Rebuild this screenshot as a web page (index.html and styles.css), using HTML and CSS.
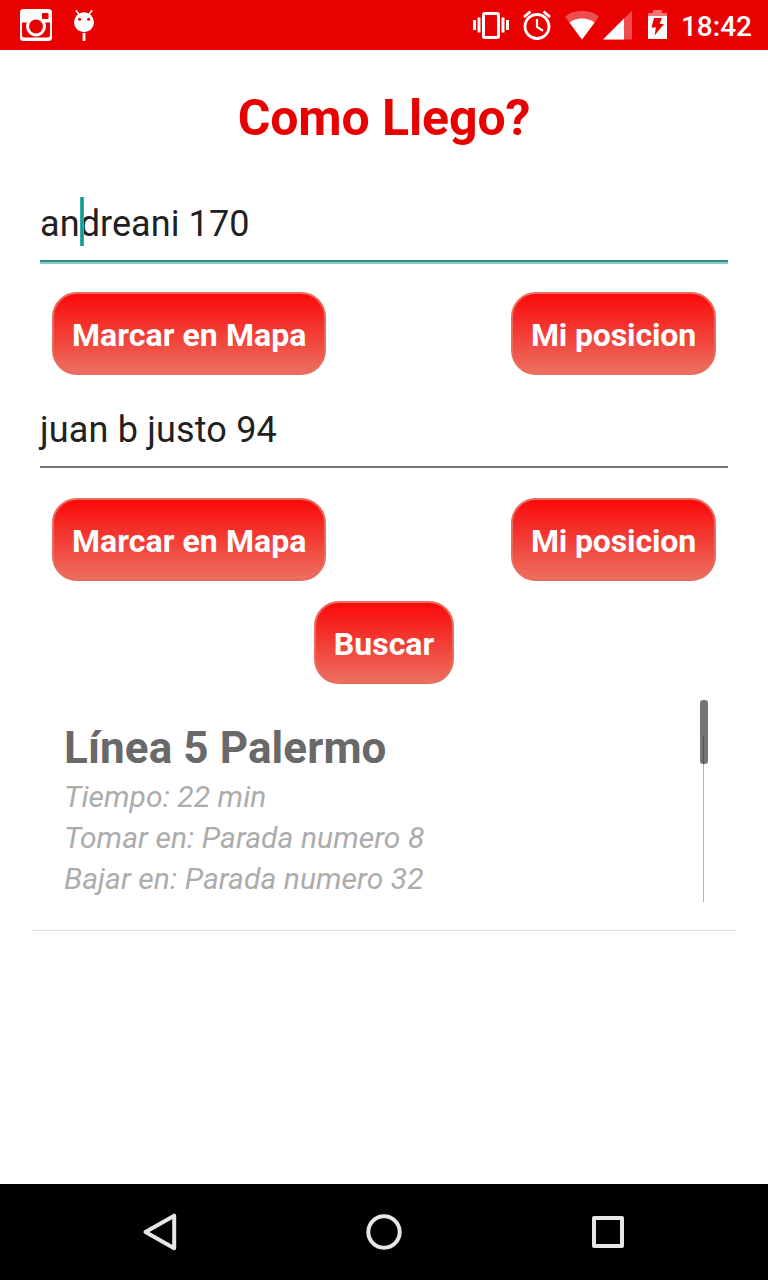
FILE: index.html
```html
<!DOCTYPE html>
<html lang="es">
<head>
    <meta charset="UTF-8">
    <meta name="viewport" content="width=device-width, initial-scale=1.0">
    <title>Como Llego?</title>
    <link rel="stylesheet" href="styles.css">
</head>
<body>
    <div class="status-bar">
        <div class="notifications">
            <svg width="32" height="32" viewBox="0 0 32 32">
                <rect width="32" height="32" rx="3.500" fill="#fff"/>
                <rect x="22" y="4" width="6.500" height="6" rx="1" fill="#e90000"/>
                <path fill="#e90000" d="M2 13.500h28V26a2.500 2.500 0 0 1-2.500 2.500h-23A2.500 2.500 0 0 1 2 26z"/>
                <path fill="#fff" d="M7 13h18v2H7z"/>
                <circle cx="16" cy="17.500" r="10" fill="#fff"/>
                <circle cx="16" cy="17.500" r="6.900" fill="#e90000"/>
            </svg>
            <svg width="22" height="32" viewBox="0 0 22 32">
                <circle cx="11" cy="13.300" r="10" fill="#fff"/>
                <path d="M2.800 1.200l3.500 4.500M19.200 1.200l-3.500 4.500" stroke="#fff" stroke-width="1.600"/>
                <path d="M11 24v8" stroke="#fff" stroke-width="2.800"/>
                <circle cx="6.600" cy="10.300" r="1.500" fill="#e90000"/>
                <circle cx="15.600" cy="10.300" r="1.500" fill="#e90000"/>
            </svg>
        </div>
        <div class="system">
            <svg class="vibrate" width="36" height="32" viewBox="0 0 36 32">
                <rect x="10.500" y="4.500" width="15" height="24" rx="1.500" fill="none" stroke="#fff" stroke-width="3"/>
                <path fill="#fff" d="M0 11h3v10H0zM4.500 8.500h3v15h-3zM28.500 8.500h3v15h-3zM33 11h3v10h-3z"/>
            </svg>
            <svg class="alarm" width="28" height="32" viewBox="0 0 28 32">
                <g fill="none" stroke="#fff" stroke-width="2.800">
                    <circle cx="14" cy="17.500" r="12"/>
                    <path d="M1 8l6.500-5.500M27 8l-6.500-5.500"/>
                    <path d="M14 10v8l6 3.800" stroke-width="2.200"/>
                </g>
            </svg>
            <svg class="wifi" width="34" height="32" viewBox="0 0 34 32">
                <path fill="#fff" fill-opacity=".3" d="M17 30.500L0 7.500C9.500 .2 24.500 .2 34 7.500z"/>
                <path fill="#fff" d="M17 30.500L4.300 13.500C11.500 8.100 22.500 8.100 29.700 13.500z"/>
            </svg>
            <svg class="signal" width="29" height="32" viewBox="0 0 29 32">
                <path fill="#fff" fill-opacity=".3" d="M0 30.500L29 1.500v29z"/>
                <path fill="#fff" d="M0 30.500L21 9.500v21z"/>
            </svg>
            <svg class="battery" width="19" height="32" viewBox="0 0 19 32">
                <path fill="#fff" fill-opacity=".45" d="M5 1h9v3h5v3H0V4h5z"/>
                <path fill="#fff" d="M0 7h19v23H0z"/>
                <path fill="#e90000" d="M6 9h8l-2.500 6H16L6.500 26.500l1.500-8H3.500z"/>
            </svg>
            <span class="clock">18:42</span>
        </div>
    </div>

    <div class="content">
        <h1 class="title">Como Llego?</h1>

        <div class="field field-active">an<span class="cursor"></span>dreani 170</div>
        <div class="button-row">
            <button class="btn btn-map">Marcar en Mapa</button>
            <button class="btn btn-position">Mi posicion</button>
        </div>

        <div class="field">juan b justo 94</div>
        <div class="button-row">
            <button class="btn btn-map">Marcar en Mapa</button>
            <button class="btn btn-position">Mi posicion</button>
        </div>

        <div class="search-row">
            <button class="btn">Buscar</button>
        </div>

        <div class="results">
            <div class="route">
                <h2>Línea 5 Palermo</h2>
                <p>Tiempo: 22 min</p>
                <p>Tomar en: Parada numero 8</p>
                <p>Bajar en: Parada numero 32</p>
            </div>
            <div class="route-line"></div>
            <div class="scroll-thumb"></div>
        </div>
    </div>

    <div class="nav-bar">
        <svg width="40" height="40" viewBox="0 0 40 40">
            <path d="M5.500 20L34.200 3.700v32.600z"/>
        </svg>
        <svg width="40" height="40" viewBox="0 0 40 40">
            <circle cx="20" cy="20" r="15.700"/>
        </svg>
        <svg width="40" height="40" viewBox="0 0 40 40">
            <rect x="6" y="6" width="28" height="28"/>
        </svg>
    </div>
</body>
</html>
```
FILE: styles.css
```css
* {
    box-sizing: border-box;
}
body {
    margin: 0;
    height: 1280px;
    display: flex;
    flex-direction: column;
    font-family: Roboto, sans-serif;
    background-color: white;
    overflow: hidden;
}
svg {
    display: block;
    flex: none;
}
.status-bar {
    height: 50px;
    padding: 0 16px 0 20px;
    display: flex;
    justify-content: space-between;
    background-color: #e90000;
    color: white;
}
.notifications {
    display: flex;
    gap: 21px;
    padding-top: 9px;
}
.system {
    display: flex;
    padding-top: 9px;
}
.alarm {
    margin-left: 14px;
}
.wifi {
    margin-left: 14px;
}
.signal {
    margin-left: 4px;
}
.battery {
    margin-left: 16px;
}
.clock {
    margin-left: 14px;
    font-size: 28px;
    font-weight: 500;
    line-height: 36px;
}
.content {
    flex: 1;
    padding: 0 32px;
}
.title {
    margin: 0;
    height: 134px;
    line-height: 136px;
    text-align: center;
    font-size: 50px;
    font-weight: bold;
    letter-spacing: -0.1px;
    color: #e90000;
}
.field {
    height: 80px;
    margin: 0 8px;
    line-height: 80px;
    font-size: 36px;
    letter-spacing: 0.17px;
    color: #212121;
    background: linear-gradient(#737373, #737373) 0 76px / 100% 2px no-repeat;
}
.field-active {
    letter-spacing: 0.08px;
    background: linear-gradient(#3e8b80 50%, #80cbc4 50%) 0 76px / 100% 4px no-repeat;
}
.cursor {
    display: inline-block;
    width: 4px;
    height: 49px;
    margin: 0 -2px;
    vertical-align: middle;
    position: relative;
    top: -5px;
    left: 2px;
    background: linear-gradient(to right, #4db6ac, #009688, #4db6ac);
}
.button-row {
    display: flex;
    justify-content: space-between;
    margin: 28px 20px 15px;
}
.btn {
    height: 83px;
    padding: 2px 18px 0;
    font-family: inherit;
    font-size: 32px;
    font-weight: bold;
    color: white;
    border: 2px solid #e86c5d;
    border-radius: 25px;
    background: linear-gradient(#fa0a0a, #ec6f60);
}
.btn-map {
    letter-spacing: 0.07px;
}
.btn-position {
    letter-spacing: -0.14px;
}
.results {
    position: relative;
    height: 231px;
    margin-top: 16px;
    border-bottom: 1px solid #dedede;
}
.search-row {
    display: flex;
    justify-content: center;
    margin-top: 20px;
}
.route {
    padding: 22px 32px 0;
}
.route h2 {
    margin: 0 0 2px;
    font-size: 44px;
    line-height: 52px;
    letter-spacing: 0.1px;
    color: #696969;
}
.route p {
    margin: 0;
    font-size: 30px;
    font-style: italic;
    line-height: 41px;
    letter-spacing: 0.06px;
    color: #acacac;
}
.route-line {
    position: absolute;
    top: 36px;
    right: 32px;
    width: 1px;
    height: 166px;
    background-color: #b2b2b2;
}
.scroll-thumb {
    position: absolute;
    top: 0;
    right: 28px;
    width: 8px;
    height: 64px;
    border-radius: 3px;
    background-color: rgba(0, 0, 0, 0.54);
}
.nav-bar {
    height: 96px;
    display: flex;
    justify-content: center;
    align-items: center;
    gap: 184px;
    background-color: black;
}
.nav-bar svg {
    fill: none;
    stroke: #e6e6e6;
    stroke-width: 4;
    stroke-linejoin: round;
}
```
